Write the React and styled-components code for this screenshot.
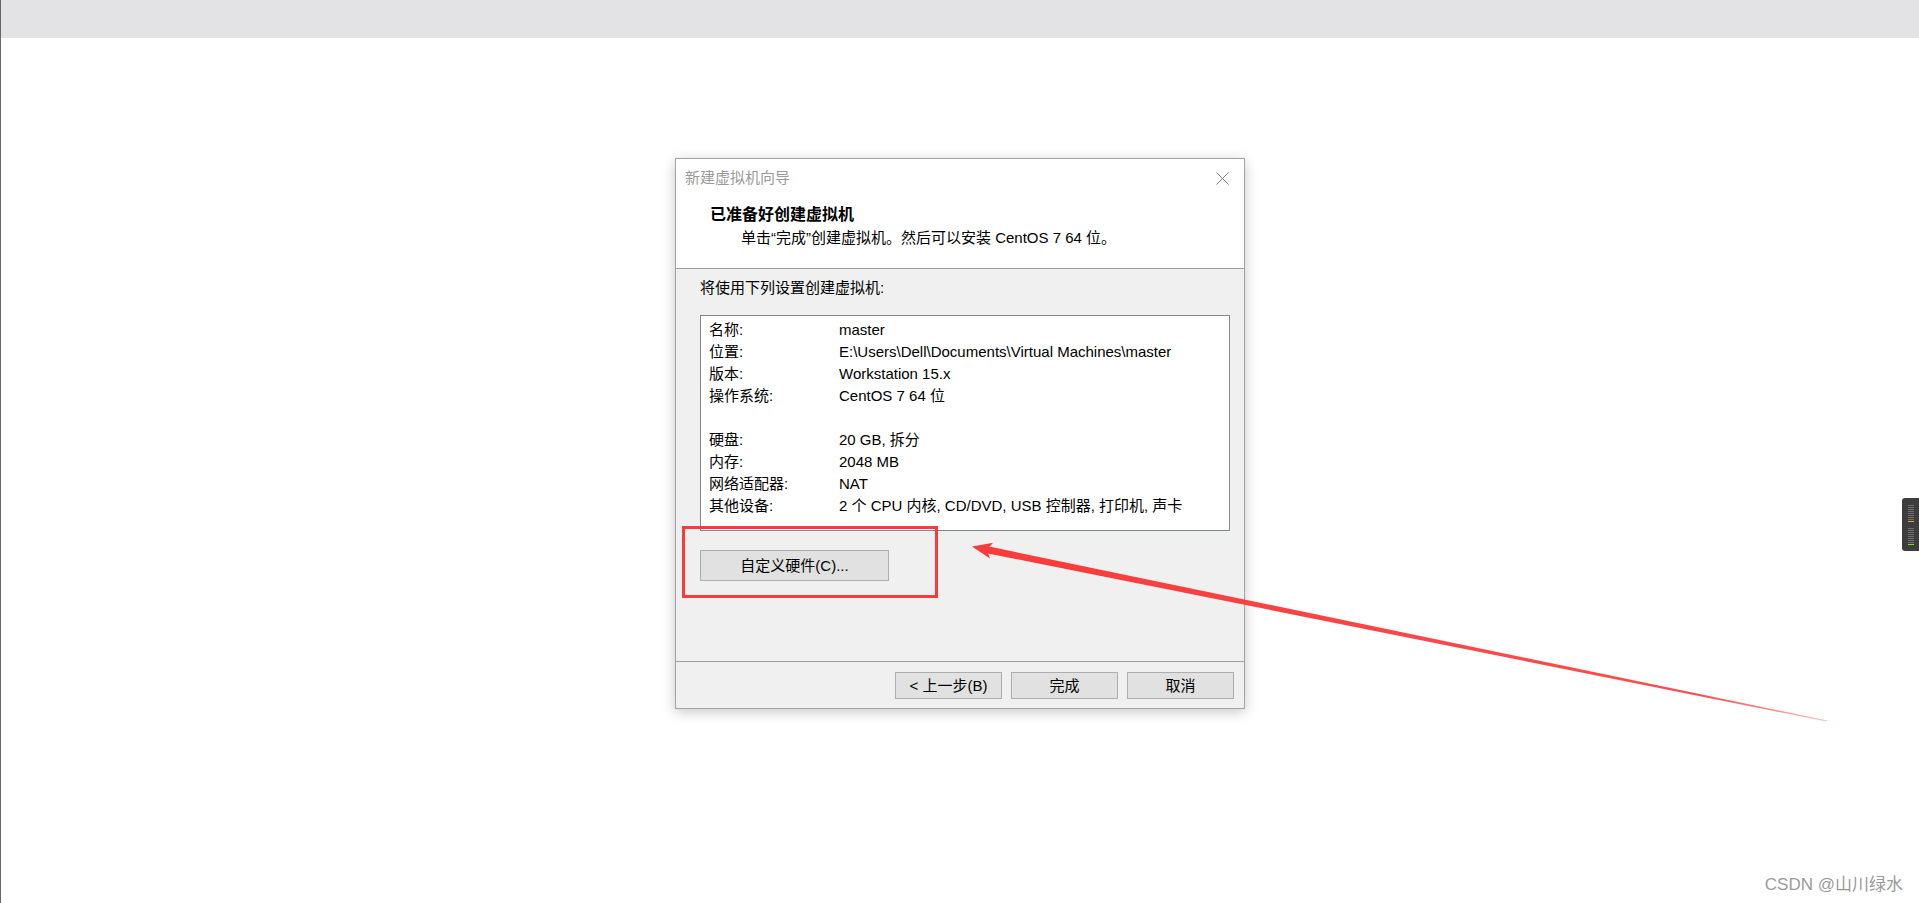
import styled, { createGlobalStyle } from 'styled-components'

const GlobalStyle = createGlobalStyle`
  html, body {
    margin: 0;
    padding: 0;
    background: #ffffff;
    overflow: hidden;
  }
  body {
    font-family: "Liberation Sans", "Noto Sans CJK SC", sans-serif;
    color: #000;
  }
  * {
    box-sizing: border-box;
  }
`

const Page = styled.div`
  position: relative;
  width: 100vw;
  height: 903px;
  border-left: 1px solid #676767;
  background: #ffffff;
`

const TopBar = styled.div`
  height: 38px;
  background: #e3e3e5;
`

const Stage = styled.div`
  display: flex;
  justify-content: center;
  padding-top: 120px;
`

const Dialog = styled.div`
  position: relative;
  width: 570px;
  height: 551px;
  display: flex;
  flex-direction: column;
  border: 1px solid #a3a3a3;
  background: #f0f0f0;
  box-shadow: 0 3px 12px rgba(0, 0, 0, 0.22);
  font-size: 15px;
`

const Header = styled.div`
  height: 110px;
  background: #ffffff;
  border-bottom: 1px solid #a0a0a0;
`

const TitleBar = styled.div`
  height: 38px;
  display: flex;
  align-items: center;
  justify-content: space-between;
  padding: 0 15px 0 9px;
`

const WindowTitle = styled.div`
  color: #9a9a9a;
  font-size: 15px;
  line-height: 20px;
`

const CloseButton = styled.div`
  width: 14px;
  height: 14px;
  display: grid;
  place-items: center;
`

const Heading = styled.div`
  margin: 8px 0 0 34px;
  font-size: 16px;
  font-weight: 700;
  line-height: 20px;
`

const SubText = styled.div`
  margin: 3px 0 0 65px;
  line-height: 20px;
`

const Body = styled.div`
  flex: 1;
  display: flex;
  flex-direction: column;
  align-items: flex-start;
  padding: 9px 0 0 24px;
  border-bottom: 1px solid #a0a0a0;
`

const Intro = styled.div`
  line-height: 20px;
`

const ListBox = styled.div`
  margin-top: 17px;
  width: 530px;
  height: 216px;
  padding: 3px 0 0 8px;
  background: #ffffff;
  border: 1px solid #82878f;
`

const Row = styled.div`
  display: flex;
  height: 22px;
  line-height: 22px;
  white-space: nowrap;
`

const Label = styled.div`
  width: 130px;
`

const Value = styled.div``

const WinButton = styled.button`
  width: ${(p) => p.$width}px;
  height: ${(p) => p.$height}px;
  padding: 0;
  border: 1px solid #adadad;
  background: #e1e1e1;
  color: #000;
  font-family: inherit;
  font-size: 15px;
  line-height: 1;
`

const CustomButton = styled(WinButton)`
  margin-top: 19px;
`

const Footer = styled.div`
  height: 46px;
  display: flex;
  justify-content: flex-end;
  align-items: flex-start;
  gap: 9px;
  padding: 10px 10px 0 0;
`

const Highlight = styled.div`
  position: absolute;
  left: 6px;
  top: 367px;
  width: 256px;
  height: 72px;
  border: 3px solid #f93b3b;
  pointer-events: none;
`

const Overlay = styled.svg`
  position: absolute;
  left: -1px;
  top: 0;
  pointer-events: none;
`

const SideWidget = styled.svg`
  position: absolute;
  right: 0;
  top: 498px;
`

const Watermark = styled.div`
  position: absolute;
  right: 16px;
  bottom: 8px;
  font-size: 17px;
  line-height: 20px;
  color: #9a9a9a;
`

const rows = [
  ['名称:', 'master'],
  ['位置:', 'E:\\Users\\Dell\\Documents\\Virtual Machines\\master'],
  ['版本:', 'Workstation 15.x'],
  ['操作系统:', 'CentOS 7 64 位'],
  ['', ''],
  ['硬盘:', '20 GB, 拆分'],
  ['内存:', '2048 MB'],
  ['网络适配器:', 'NAT'],
  ['其他设备:', '2 个 CPU 内核, CD/DVD, USB 控制器, 打印机, 声卡'],
]

function Arrow() {
  return (
    <Overlay width="1920" height="903" viewBox="0 0 1920 903">
      <defs>
        <linearGradient id="shaft" gradientUnits="userSpaceOnUse" x1="986" y1="549" x2="1827" y2="721">
          <stop offset="0" stopColor="#f93b3b" stopOpacity="1" />
          <stop offset="0.85" stopColor="#f93b3b" stopOpacity="0.9" />
          <stop offset="1" stopColor="#f93b3b" stopOpacity="0.35" />
        </linearGradient>
      </defs>
      <polygon points="985.3,552.9 986.7,546.1 1827.1,720.4 1826.9,721.6" fill="url(#shaft)" />
      <polygon points="972,546.6 993.2,542.8 986.7,549.6 990,558.4" fill="#f93b3b" />
    </Overlay>
  )
}

function Meter() {
  const lines = [0, 1, 2, 3, 4, 5, 6, 7]
  return (
    <SideWidget width="17" height="53" viewBox="0 0 17 53">
      <path d="M3 0H17V53H3A3 3 0 0 1 0 50V3A3 3 0 0 1 3 0Z" fill="#3d3d3d" />
      {lines.map((i) => (
        <rect key={'a' + i} x="6" y={7 + i * 2} width="6" height="1" fill="#707070" />
      ))}
      <rect x="6" y="23" width="6" height="1" fill="#e8a03c" />
      {lines.map((i) => (
        <rect key={'b' + i} x="6" y={30 + i * 2} width="6" height="1" fill="#707070" />
      ))}
      <rect x="6" y="46" width="6" height="1" fill="#7ddc22" />
    </SideWidget>
  )
}

export default function App() {
  return (
    <>
      <GlobalStyle />
      <Page>
        <TopBar />
        <Stage>
          <Dialog>
            <Header>
              <TitleBar>
                <WindowTitle>新建虚拟机向导</WindowTitle>
                <CloseButton>
                  <svg width="13" height="13" viewBox="0 0 13 13">
                    <path d="M0.5 0.5L12.5 12.5M12.5 0.5L0.5 12.5" stroke="#7a7a7a" strokeWidth="1" fill="none" />
                  </svg>
                </CloseButton>
              </TitleBar>
              <Heading>已准备好创建虚拟机</Heading>
              <SubText>单击“完成”创建虚拟机。然后可以安装 CentOS 7 64 位。</SubText>
            </Header>
            <Body>
              <Intro>将使用下列设置创建虚拟机:</Intro>
              <ListBox>
                {rows.map(([label, value], i) => (
                  <Row key={i}>
                    <Label>{label}</Label>
                    <Value>{value}</Value>
                  </Row>
                ))}
              </ListBox>
              <CustomButton type="button" $width={189} $height={31}>
                自定义硬件(C)...
              </CustomButton>
            </Body>
            <Footer>
              <WinButton type="button" $width={107} $height={27}>
                &lt; 上一步(B)
              </WinButton>
              <WinButton type="button" $width={107} $height={27}>
                完成
              </WinButton>
              <WinButton type="button" $width={107} $height={27}>
                取消
              </WinButton>
            </Footer>
            <Highlight />
          </Dialog>
        </Stage>
        <Arrow />
        <Meter />
        <Watermark>CSDN @山川绿水</Watermark>
      </Page>
    </>
  )
}
